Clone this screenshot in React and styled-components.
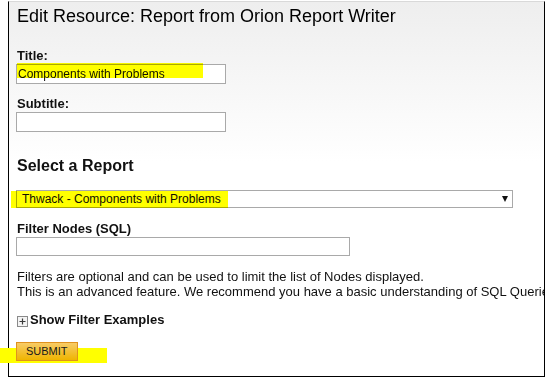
import React from "react";
import styled, { createGlobalStyle } from "styled-components";

const GlobalStyle = createGlobalStyle`
  body {
    margin: 0;
    background: #fff;
    font-family: "Liberation Sans", Arial, sans-serif;
    color: #000;
  }
`;

const Page = styled.div`
  padding: 1px 0 0 8px;
`;

const Frame = styled.div`
  position: relative;
  box-sizing: border-box;
  width: 537px;
  height: 376px;
  border: 1px solid #000;
  border-top-color: #d9d9d9;
  background: linear-gradient(#eeeeee, #ffffff 160px);
  padding: 3px 0 0 7px;
`;

const Heading = styled.h1`
  margin: 0 0 0 1px;
  font-size: 18px;
  font-weight: normal;
  line-height: 22px;
  color: #000;
`;

const Label = styled.label`
  display: block;
  margin: ${(p) => p.$gap}px 0 1px 1px;
  font-size: 13px;
  font-weight: bold;
  line-height: 15px;
  color: #111;
`;

const Field = styled.div`
  position: relative;
  width: ${(p) => p.$w}px;
`;

const TextBox = styled.input`
  display: block;
  box-sizing: border-box;
  width: 100%;
  height: ${(p) => p.$h || 20}px;
  margin: 0;
  padding: 0 1px;
  border: 1px solid #a9a9a9;
  background: #fff;
  font-family: "Liberation Sans", Arial, sans-serif;
  font-size: 12px;
  color: #111;
  outline: none;
`;

const SectionTitle = styled.h2`
  margin: 24px 0 0 1px;
  font-size: 16px;
  font-weight: bold;
  line-height: 20px;
  color: #111;
`;

const SelectBox = styled.div`
  position: relative;
  box-sizing: border-box;
  display: flex;
  align-items: center;
  justify-content: space-between;
  width: 497px;
  height: 18px;
  margin-top: 14px;
  padding: 0 4px 0 5px;
  border: 1px solid #a9a9a9;
  background: #fff;
  font-size: 12px;
  color: #111;
`;

const Arrow = styled.span`
  width: 0;
  height: 0;
  border-left: 3.5px solid transparent;
  border-right: 3.5px solid transparent;
  border-top: 6px solid #111;
`;

const Note = styled.p`
  margin: 13px 0 0 1px;
  font-size: 13px;
  line-height: 15px;
  white-space: nowrap;
  overflow: hidden;
  color: #111;
`;

const Toggle = styled.div`
  display: flex;
  align-items: flex-start;
  gap: 2px;
  margin: 13px 0 0 1px;
  font-size: 13px;
  font-weight: bold;
  line-height: 15px;
  color: #111;
  cursor: pointer;

  svg {
    margin-top: 4px;
  }
`;

const ButtonRow = styled.div`
  position: relative;
  margin-top: 14px;
`;

const Submit = styled.button`
  position: relative;
  z-index: 1;
  box-sizing: border-box;
  height: 19px;
  margin: 0;
  padding: 0 9px;
  border: 1px solid #e0921e;
  background: linear-gradient(#f8cb66, #efb500);
  font-family: "Liberation Sans", Arial, sans-serif;
  font-size: 11px;
  color: #1a1a1a;
  cursor: pointer;
`;

// yellow highlighter marks laid over the form
const Marker = styled.span`
  position: absolute;
  top: ${(p) => p.$top}px;
  left: ${(p) => p.$left}px;
  width: ${(p) => p.$w}px;
  height: ${(p) => p.$h}px;
  background: #ffff00;
  mix-blend-mode: ${(p) => (p.$blend ? "multiply" : "normal")};
  pointer-events: none;
`;

function PlusIcon() {
  return (
    <svg width="11" height="11" viewBox="0 0 11 11">
      <rect x="0.5" y="0.5" width="10" height="10" fill="#f4f4f4" stroke="#8a8a8a" />
      <path d="M2.5 5.5h6M5.5 2.5v6" stroke="#3a3a3a" strokeWidth="1.2" />
    </svg>
  );
}

export default function App() {
  return (
    <Page>
      <GlobalStyle />
      <Frame>
        <Heading>Edit Resource: Report from Orion Report Writer</Heading>

        <Label $gap={21}>Title:</Label>
        <Field $w={210}>
          <TextBox defaultValue="Components with Problems" />
          <Marker $top={-1} $left={1} $w={186} $h={15} $blend />
        </Field>

        <Label $gap={12}>Subtitle:</Label>
        <Field $w={210}>
          <TextBox defaultValue="" />
        </Field>

        <SectionTitle>Select a Report</SectionTitle>
        <SelectBox>
          <span>Thwack - Components with Problems</span>
          <Arrow />
          <Marker $top={0} $left={-6} $w={217} $h={17} $blend />
        </SelectBox>

        <Label $gap={13}>Filter Nodes (SQL)</Label>
        <Field $w={334}>
          <TextBox $h={19} defaultValue="" />
        </Field>

        <Note>
          Filters are optional and can be used to limit the list of Nodes displayed.
          <br />
          This is an advanced feature. We recommend you have a basic understanding of SQL Queries.
        </Note>

        <Toggle>
          <PlusIcon />
          Show Filter Examples
        </Toggle>

        <ButtonRow>
          <Marker $top={7} $left={-16} $w={107} $h={15} />
          <Submit type="button">SUBMIT</Submit>
        </ButtonRow>
      </Frame>
    </Page>
  );
}
